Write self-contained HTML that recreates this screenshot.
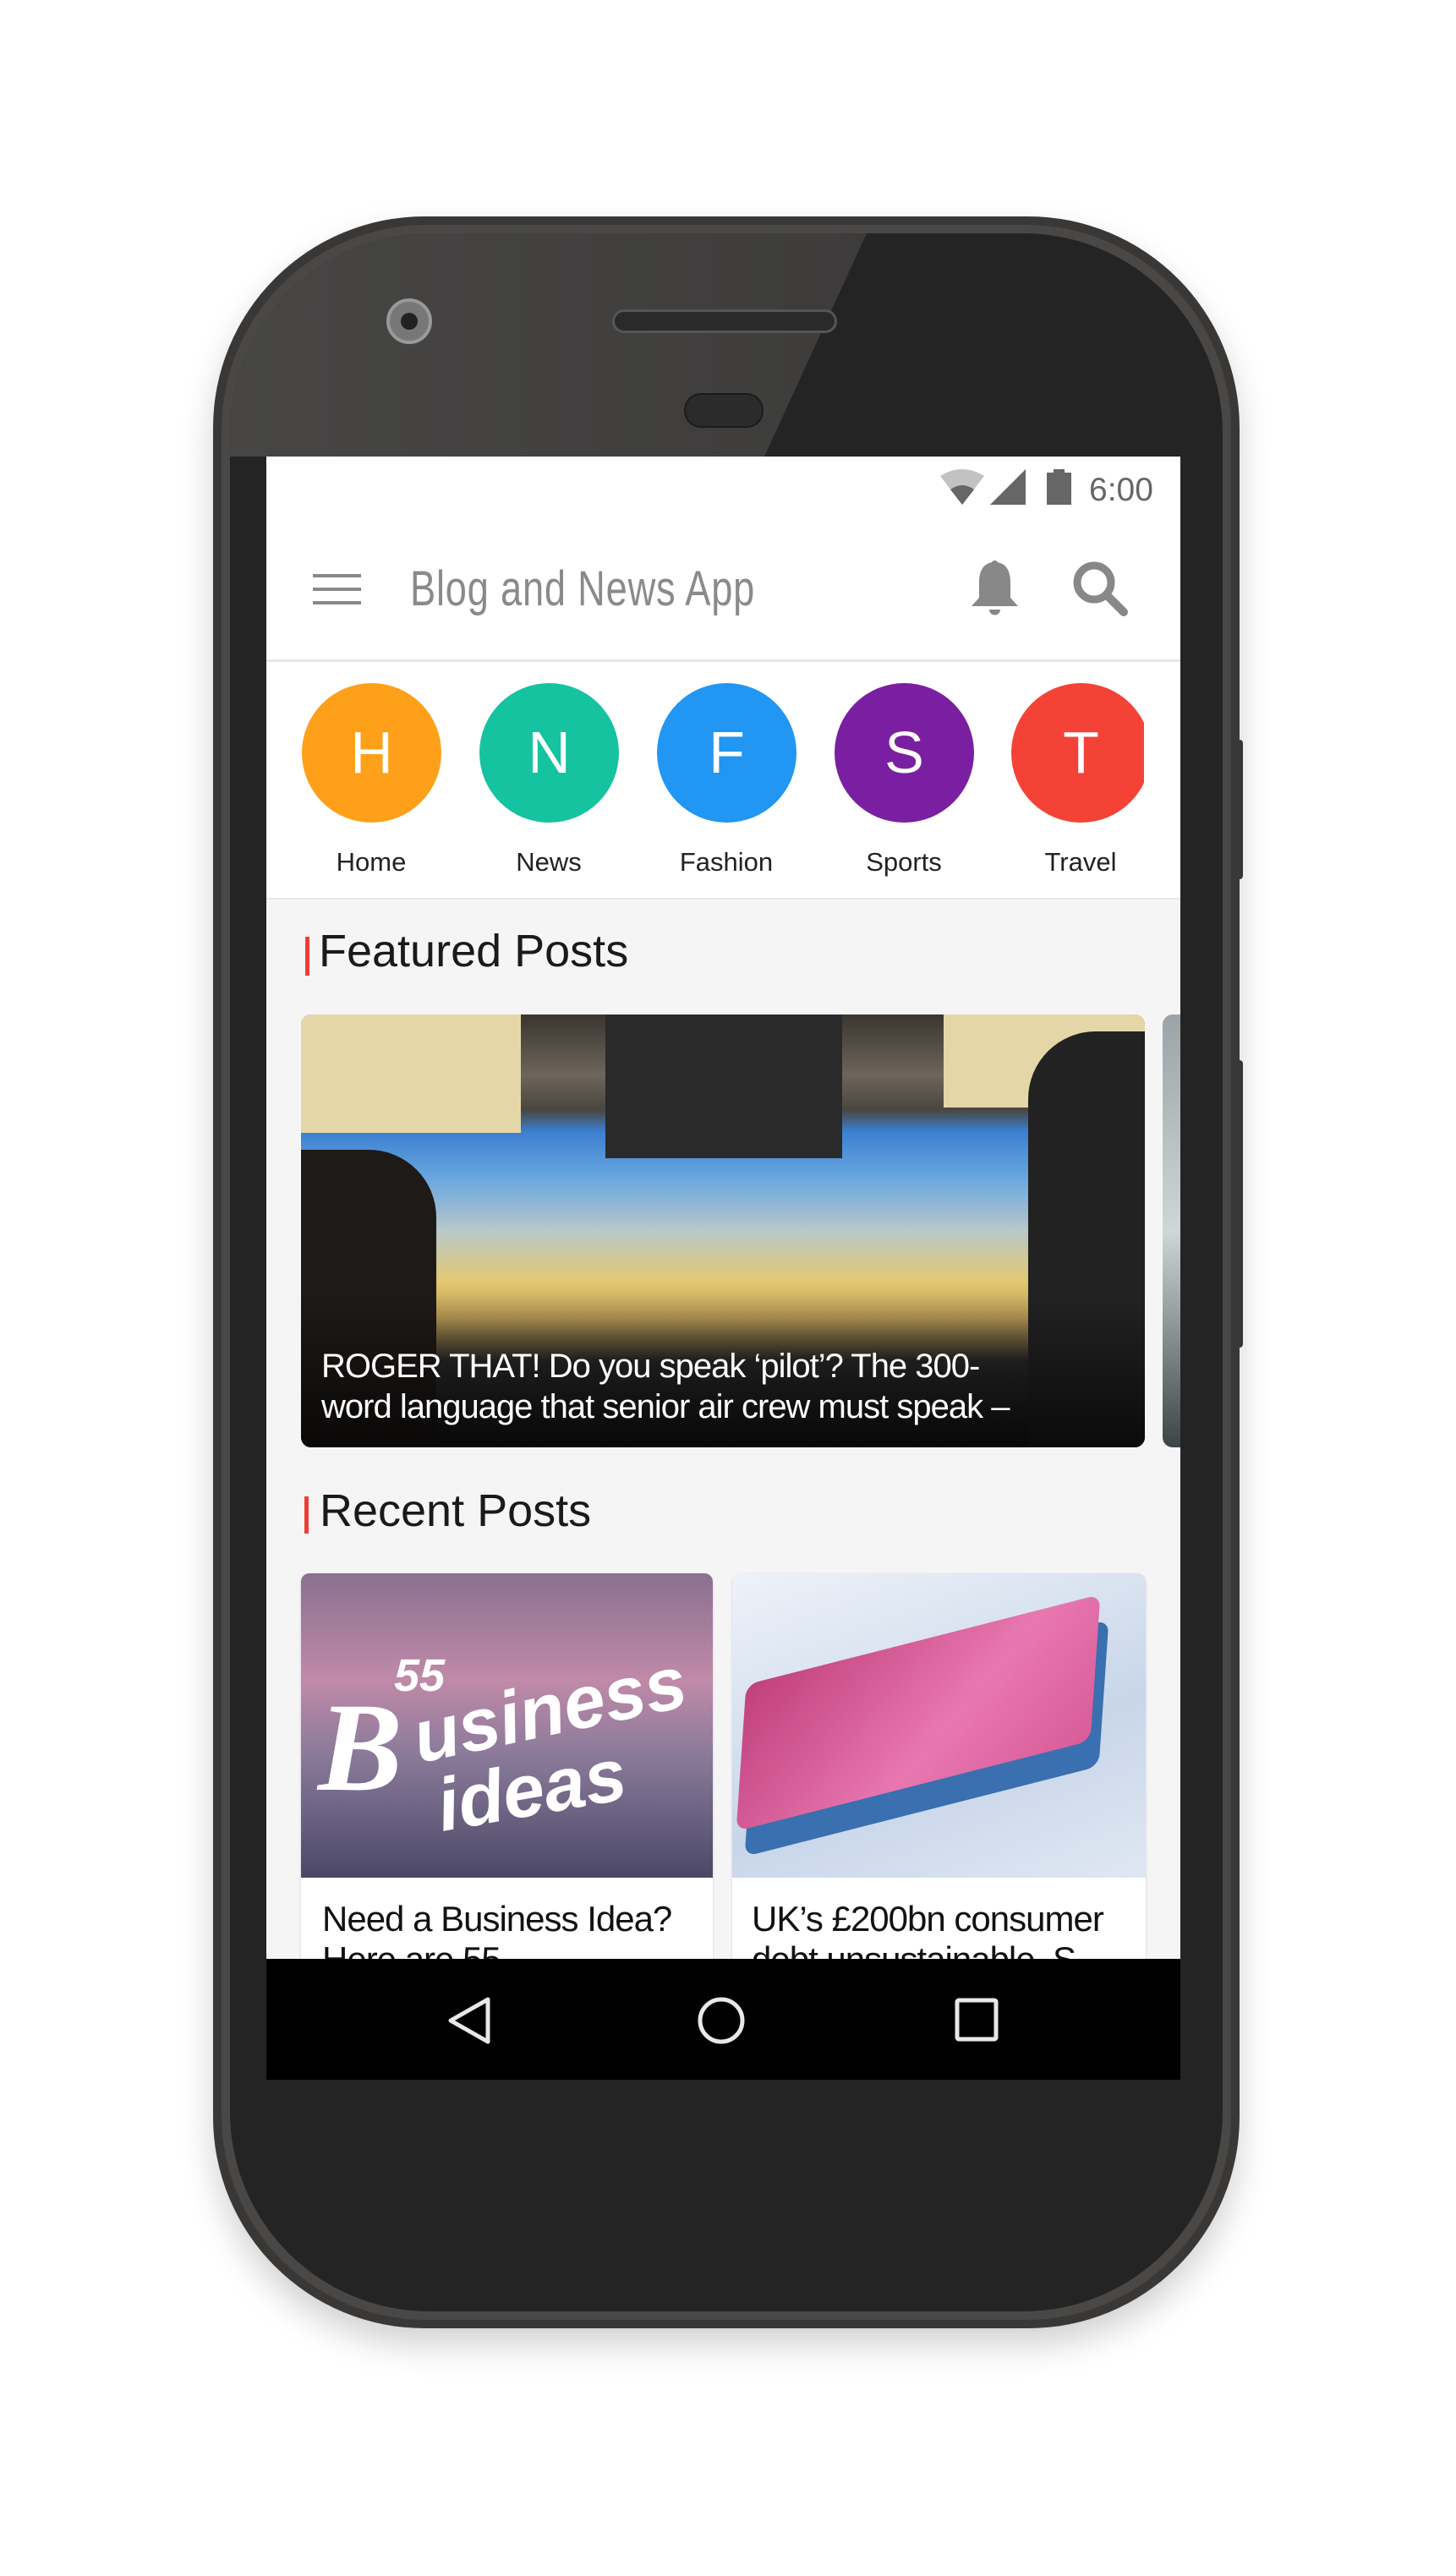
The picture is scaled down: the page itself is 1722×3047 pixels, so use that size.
<!DOCTYPE html>
<html><head><meta charset="utf-8"><style>
*{margin:0;padding:0;box-sizing:border-box}
body{width:1722px;height:3047px;background:#fff;position:relative;overflow:hidden;font-family:"Liberation Sans",sans-serif}
.abs{position:absolute}
.phone{left:252px;top:256px;width:1214px;height:2498px;border-radius:250px;background:#3a3836;box-shadow:0 20px 40px rgba(0,0,0,.18)}
.phone2{left:262px;top:266px;width:1194px;height:2478px;border-radius:242px;background:#4a4846}
.face{left:272px;top:276px;width:1174px;height:2458px;border-radius:236px;background:#242424;overflow:hidden}
.screen{left:315px;top:540px;width:1081px;height:1920px;background:#f6f5f6;overflow:hidden}
.circ{width:165px;height:165px;border-radius:50%;color:#fff;font-size:70px;text-align:center;line-height:165px;top:268px}
.lab{font-size:31px;color:#222;width:210px;text-align:center;top:462px}
.h2{font-size:54px;color:#1a1a1a}
.bar{width:5px;background:#ef3e36}
</style></head><body>
<div class="abs" style="left:1458px;top:875px;width:12px;height:165px;background:#3c3a38;border-radius:4px"></div>
<div class="abs" style="left:1458px;top:1254px;width:12px;height:340px;background:#3c3a38;border-radius:4px"></div>
<div class="abs phone"></div>
<div class="abs phone2"></div>
<div class="abs face">
 <svg class="abs" style="left:0;top:0" width="1174" height="264"><defs><linearGradient id="g" x1="0" x2="1" y1="0" y2="0"><stop offset="0" stop-color="#474645"/><stop offset="1" stop-color="#3d3c3b"/></linearGradient></defs><polygon points="0,0 753,0 632,264 0,264" fill="url(#g)"/></svg>
</div>
<div class="abs" style="left:457px;top:353px;width:54px;height:54px;border-radius:50%;background:#777;border:4px solid #999"></div>
<div class="abs" style="left:474px;top:370px;width:20px;height:20px;border-radius:50%;background:#222"></div>
<div class="abs" style="left:724px;top:366px;width:266px;height:28px;border-radius:14px;background:#2a2a2a;border:3px solid #555"></div>
<div class="abs" style="left:809px;top:465px;width:94px;height:41px;border-radius:20px;background:#2b2b2b;border:2px solid #1c1c1c"></div>

<div class="abs screen">
 <div class="abs" style="left:0;top:0;width:1081px;height:523px;background:#fff"></div>
 <svg class="abs" style="left:797px;top:15px" width="160" height="44" viewBox="0 0 160 44">
  <path d="M0 8 Q26 -8 52 8 L26 42 Z" fill="#c2c2c2"/>
  <path d="M12 24 Q26 14 40 24 L26 42 Z" fill="#666"/>
  <path d="M59 42 L101 0 L101 42 Z" fill="#666"/>
  <rect x="126" y="4" width="29" height="38" fill="#666"/><rect x="134" y="0" width="13" height="5" fill="#666"/>
 </svg>
 <div class="abs" style="left:973px;top:18px;font-size:39px;color:#666">6:00</div>
 <div class="abs" style="left:55px;top:139px;width:57px;height:4px;background:#888;box-shadow:0 16px 0 #888,0 32px 0 #888"></div>
 <div class="abs" style="left:170px;top:123px;font-size:58px;color:#8a8a8a;transform:scaleX(.78);transform-origin:left;letter-spacing:1px">Blog and News App</div>
 <svg class="abs" style="left:833px;top:123px" width="57" height="66" viewBox="0 0 57 66">
  <circle cx="28.5" cy="4" r="4" fill="#888"/>
  <path d="M28.5 2 C14 2 10 14 10 26 L10 44 L1 54 L56 54 L47 44 L47 26 C47 14 43 2 28.5 2 Z" fill="#888"/>
  <path d="M22 58 A6.5 6.5 0 0 0 35 58 Z" fill="#888"/>
 </svg>
 <svg class="abs" style="left:953px;top:123px" width="67" height="66" viewBox="0 0 67 66">
  <circle cx="26" cy="26" r="20" fill="none" stroke="#888" stroke-width="9"/>
  <path d="M41 41 L61 61" stroke="#888" stroke-width="10" stroke-linecap="round"/>
 </svg>
 <div class="abs" style="left:0;top:240px;width:1081px;height:3px;background:#e6e6e6"></div>
 <div class="abs circ" style="left:42px;background:#ffa01a">H</div>
 <div class="abs circ" style="left:252px;background:#15c3a0">N</div>
 <div class="abs circ" style="left:462px;background:#2196f3">F</div>
 <div class="abs circ" style="left:672px;background:#7b1fa2">S</div>
 <div class="abs" style="left:881px;top:268px;width:157px;height:165px;overflow:hidden"><div class="circ abs" style="left:0;top:0;background:#f44336">T</div></div>
 <div class="abs lab" style="left:19px">Home</div>
 <div class="abs lab" style="left:229px">News</div>
 <div class="abs lab" style="left:439px">Fashion</div>
 <div class="abs lab" style="left:649px">Sports</div>
 <div class="abs lab" style="left:858px">Travel</div>
 <div class="abs" style="left:0;top:522px;width:1081px;height:2px;background:#e8e8e8"></div>
 <div class="abs bar" style="left:46px;top:568px;height:46px"></div>
 <div class="abs h2" style="left:62px;top:554px">Featured Posts</div>
 <div class="abs" style="left:41px;top:660px;width:998px;height:512px;border-radius:12px;overflow:hidden;background:linear-gradient(180deg,#3a3530 0%,#6d655a 14%,#4a4640 22%,#3b7fd0 27%,#6aa7e0 38%,#b9c8c8 50%,#e4c870 62%,#b89a55 70%,#2a2a2a 80%,#1c1c1c 100%)">
  <div class="abs" style="left:0;top:0;width:260px;height:140px;background:#e5d6a8"></div>
  <div class="abs" style="left:760px;top:0;width:238px;height:110px;background:#e5d6a8"></div>
  <div class="abs" style="left:360px;top:0;width:280px;height:170px;background:#2a2a2a"></div>
  <div class="abs" style="left:0;top:160px;width:160px;height:352px;background:#1e1a18;border-radius:0 80px 0 0"></div>
  <div class="abs" style="left:860px;top:20px;width:138px;height:492px;background:#222;border-radius:80px 0 0 0"></div>
  <div class="abs" style="left:0;top:330px;width:998px;height:182px;background:linear-gradient(180deg,rgba(0,0,0,0),rgba(0,0,0,.7))"></div>
  <div class="abs" style="left:24px;top:392px;width:860px;font-size:40px;line-height:48px;color:#fff;letter-spacing:-1px">ROGER THAT! Do you speak ‘pilot’? The 300-word language that senior air crew must speak –</div>
 </div>
 <div class="abs" style="left:1060px;top:660px;width:40px;height:512px;border-radius:12px;background:linear-gradient(180deg,#9aa3a6,#cfd6d6 50%,#3c4446)"></div>
 <div class="abs bar" style="left:45px;top:1230px;height:44px"></div>
 <div class="abs h2" style="left:63px;top:1216px">Recent Posts</div>
 <div class="abs" style="left:41px;top:1321px;width:487px;height:600px;border-radius:10px;overflow:hidden;background:#fff;box-shadow:0 1px 3px rgba(0,0,0,.15)">
  <div class="abs" style="left:0;top:0;width:487px;height:360px;background:linear-gradient(180deg,#8a7090 0%,#c08aa8 35%,#8a7a9a 60%,#4a4866 100%)">
   <div class="abs" style="left:110px;top:90px;font-size:54px;color:#fff;font-weight:bold;font-style:italic">55</div>
   <div class="abs" style="left:20px;top:120px;font-size:150px;color:#fff;font-weight:bold;font-style:italic;font-family:'Liberation Serif',serif">B</div>
   <div class="abs" style="left:130px;top:110px;font-size:88px;color:#fff;font-weight:bold;font-style:italic;transform:rotate(-12deg)">usiness</div>
   <div class="abs" style="left:160px;top:205px;font-size:88px;color:#fff;font-weight:bold;font-style:italic;transform:rotate(-10deg)">ideas</div>
  </div>
  <div class="abs" style="left:25px;top:385px;font-size:42px;color:#111;letter-spacing:-1px;white-space:nowrap">Need a Business Idea?<br>Here are 55</div>
 </div>
 <div class="abs" style="left:551px;top:1321px;width:489px;height:600px;border-radius:10px;overflow:hidden;background:#fff;box-shadow:0 1px 3px rgba(0,0,0,.15)">
  <div class="abs" style="left:0;top:0;width:489px;height:360px;background:linear-gradient(160deg,#eef2f8,#c8d6ea 60%,#dfe7f2)">
   <div class="abs" style="left:20px;top:110px;width:420px;height:170px;background:#3a6fb0;transform:skewY(-18deg) rotate(4deg);border-radius:14px"></div>
   <div class="abs" style="left:10px;top:80px;width:420px;height:170px;background:linear-gradient(135deg,#c0407c,#e877b0 60%,#d85c98);transform:skewY(-18deg) rotate(4deg);border-radius:14px"></div>
  </div>
  <div class="abs" style="left:23px;top:385px;font-size:42px;color:#111;letter-spacing:-1px;white-space:nowrap">UK’s £200bn consumer<br>debt unsustainable, S</div>
 </div>
 <div class="abs" style="left:0;top:1777px;width:1081px;height:143px;background:#000">
  <svg class="abs" style="left:210px;top:44px" width="60" height="58" viewBox="0 0 60 58"><path d="M52 4 L8 29 L52 54 Z" fill="none" stroke="#e8e8e8" stroke-width="5" stroke-linejoin="round"/></svg>
  <svg class="abs" style="left:508px;top:43px" width="60" height="60" viewBox="0 0 60 60"><circle cx="30" cy="30" r="25" fill="none" stroke="#e8e8e8" stroke-width="5"/></svg>
  <svg class="abs" style="left:812px;top:44px" width="56" height="56" viewBox="0 0 56 56"><rect x="5" y="5" width="46" height="46" rx="2" fill="none" stroke="#e8e8e8" stroke-width="5"/></svg>
 </div>
</div>
</body></html>
